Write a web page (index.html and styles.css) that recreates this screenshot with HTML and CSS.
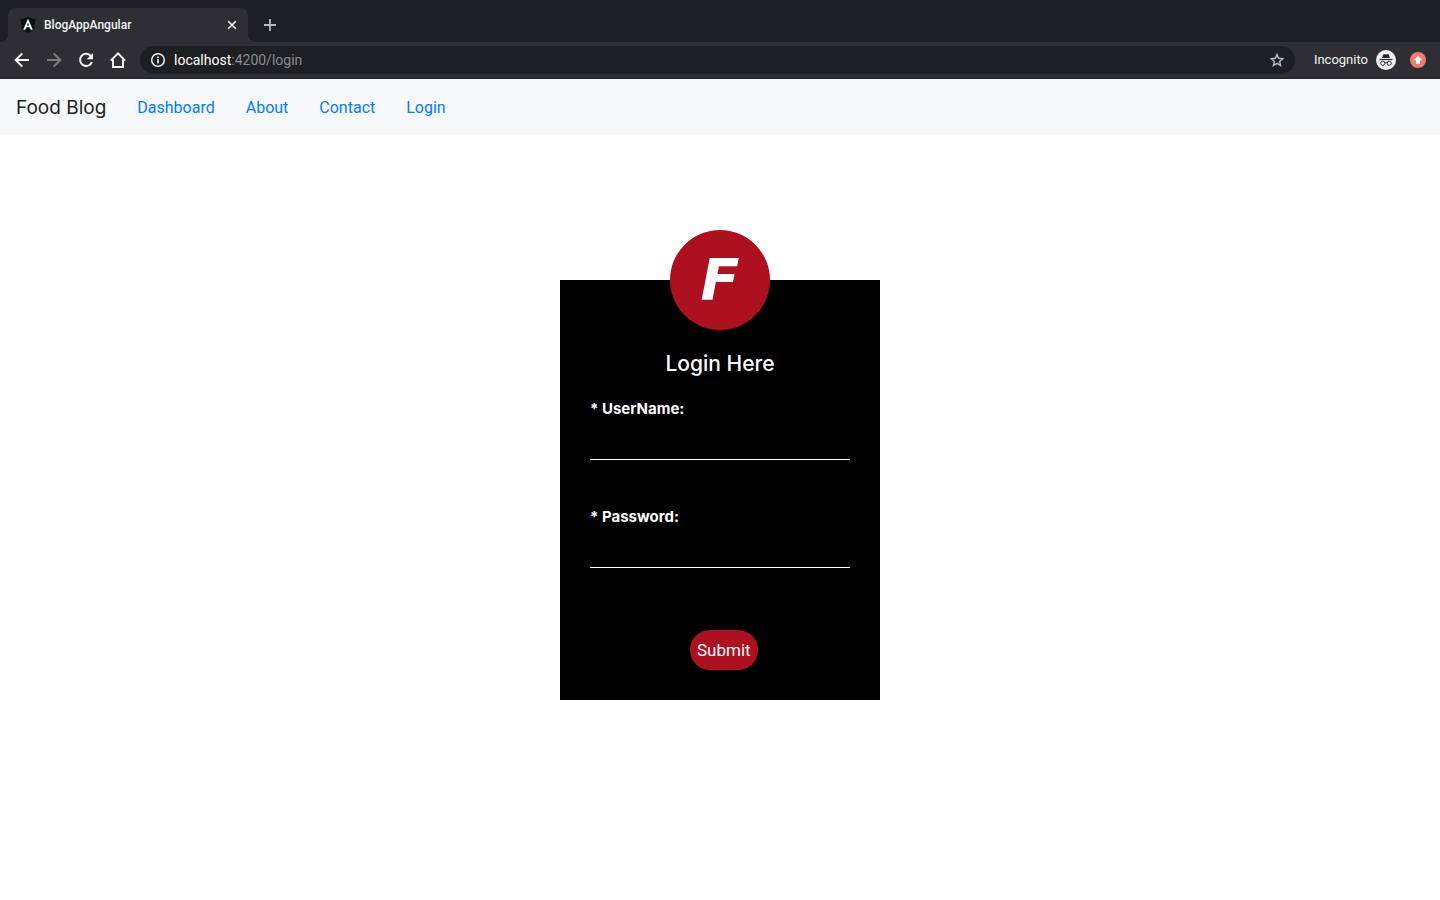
FILE: index.html
```html
<!DOCTYPE html>
<html lang="en">
<head>
<meta charset="utf-8">
<meta name="viewport" content="width=device-width, initial-scale=1">
<title>BlogAppAngular</title>
<link rel="stylesheet" href="styles.css">
</head>
<body>
<header class="browser">
  <div class="tabstrip">
    <div class="tab">
      <svg class="favicon" width="16" height="16" viewBox="0 0 16 16" aria-hidden="true"><path d="M8 0l7.500 2.600-1.200 9.900L8 16l-6.300-3.500L.5 2.600z" fill="#0b1119"/><path d="M8 1.700L3.200 12.700h2.100l1-2.500h3.400l1 2.500h2.100zM8 5.500l1.100 2.900H6.900z" fill="#fff"/></svg>
      <span class="tab-title">BlogAppAngular</span>
      <button class="icon-button tab-close" type="button" aria-label="Close tab"><svg width="16" height="16" viewBox="0 0 16 16"><path d="M4.200 4.200l7.600 7.600M11.800 4.200l-7.600 7.600" stroke="#f1f3f4" stroke-width="1.600"/></svg></button>
    </div>
    <button class="icon-button new-tab" type="button" aria-label="New tab"><svg width="16" height="16" viewBox="0 0 16 16"><path d="M8 2v12M2 8h12" stroke="#b9babd" stroke-width="1.800"/></svg></button>
  </div>
  <div class="toolbar">
    <div class="controls">
      <button class="icon-button" type="button" aria-label="Back"><svg width="16" height="16" viewBox="0 0 16 16"><path d="M15 8H2M8.300 1.400L1.700 8l6.600 6.600" fill="none" stroke="#f1f3f4" stroke-width="2"/></svg></button>
      <button class="icon-button" type="button" aria-label="Forward"><svg width="16" height="16" viewBox="0 0 16 16"><path d="M1 8h13M7.700 1.400L14.300 8l-6.600 6.600" fill="none" stroke="#7d7d80" stroke-width="2"/></svg></button>
      <button class="icon-button" type="button" aria-label="Reload"><svg width="16" height="16" viewBox="0 0 16 16"><path d="M12.600 3.700A6.100 6.100 0 1 0 13.900 10" fill="none" stroke="#f1f3f4" stroke-width="2"/><path d="M15 .9v6.300H8.700z" fill="#f1f3f4"/></svg></button>
      <button class="icon-button" type="button" aria-label="Home"><svg width="16" height="16" viewBox="0 0 16 16"><path d="M.8 8.700L8 1.300l7.200 7.400M3 7.500V15h10V7.500" fill="none" stroke="#f1f3f4" stroke-width="1.900"/></svg></button>
    </div>
    <div class="address">
      <svg width="16" height="16" viewBox="0 0 16 16" aria-hidden="true"><circle cx="8" cy="8" r="6.300" fill="none" stroke="#f1f3f4" stroke-width="1.500"/><path d="M8 7.200v4M8 4.400v1.600" stroke="#f1f3f4" stroke-width="1.700"/></svg>
      <span class="url"><span class="url-host">localhost</span>:4200/login</span>
      <button class="icon-button" type="button" aria-label="Bookmark this page"><svg width="16" height="16" viewBox="0 0 16 16"><path d="M8 2.400l1.600 3.900 4.200.4-3.200 2.800 1 4.100L8 11.400l-3.600 2.200 1-4.100-3.200-2.800 4.200-.4z" fill="none" stroke="#b9babd" stroke-width="1.400"/></svg></button>
    </div>
    <span class="incognito">Incognito
      <svg width="20" height="20" viewBox="0 0 20 20" aria-hidden="true"><circle cx="10" cy="10" r="10" fill="#f1f3f4"/><path d="M6 8l1.300-3.600q.2-.5.700-.4l2 .4 2-.4q.5-.1.700.4L14 8z" fill="#2f2f33"/><path d="M3.500 9.500h13" stroke="#2f2f33" stroke-width="1.200"/><circle cx="6.800" cy="13.200" r="2.100" fill="none" stroke="#2f2f33"/><circle cx="13.200" cy="13.200" r="2.100" fill="none" stroke="#2f2f33"/><path d="M8.900 12.900q1.100-.7 2.200 0" fill="none" stroke="#2f2f33"/></svg>
    </span>
    <button class="icon-button update" type="button" aria-label="Update available"><svg width="16" height="16" viewBox="0 0 16 16"><circle cx="8" cy="8" r="8" fill="#f07b72"/><path d="M8 3.800L12.200 8.200H10V12H6V8.200H3.800z" fill="#fff"/></svg></button>
  </div>
</header>
<nav class="navbar">
  <a class="brand" href="#">Food Blog</a>
  <a class="nav-link" href="#">Dashboard</a>
  <a class="nav-link" href="#">About</a>
  <a class="nav-link" href="#">Contact</a>
  <a class="nav-link" href="#">Login</a>
</nav>
<main class="page">
  <form class="login">
    <div class="logo">F</div>
    <h1 class="heading">Login Here</h1>
    <div class="field">
      <label for="username">* UserName:</label>
      <input id="username" type="text">
    </div>
    <div class="field">
      <label for="password">* Password:</label>
      <input id="password" type="password">
    </div>
    <button class="submit" type="button">Submit</button>
  </form>
</main>
</body>
</html>
```
FILE: styles.css
```css
* {
  box-sizing: border-box;
}

body {
  margin: 0;
  background: #fff;
  color: #212529;
  font: 16px/24px Inter, Roboto, "Liberation Sans", sans-serif;
}

svg {
  display: block;
  flex: none;
}

.icon-button {
  display: block;
  flex: none;
  padding: 0;
  border: 0;
  background: none;
}

.browser {
  color: #f1f3f4;
  background: #2f2f33;
}

.tabstrip {
  display: flex;
  align-items: flex-end;
  height: 42px;
  padding-left: 8px;
  background: #1e1f23;
}

.tab {
  position: relative;
  display: flex;
  align-items: center;
  gap: 8px;
  width: 240px;
  height: 34px;
  padding: 0 8px 0 12px;
  border-radius: 8px 8px 0 0;
  background: #2f2f33;
}

.tab::before,
.tab::after {
  content: "";
  position: absolute;
  bottom: 0;
  width: 8px;
  height: 8px;
}

.tab::before {
  right: 100%;
  background: radial-gradient(circle at 0 0, #1e1f23 8px, #2f2f33 8px);
}

.tab::after {
  left: 100%;
  background: radial-gradient(circle at 100% 0, #1e1f23 8px, #2f2f33 8px);
}

.tab-title {
  flex: 1;
  font: 500 12px/16px Roboto, sans-serif;
}

.new-tab {
  margin: 0 0 9px 14px;
}

.toolbar {
  display: flex;
  align-items: center;
  height: 37px;
  padding: 0 14px;
  border-bottom: 1px solid #232327;
}

.controls {
  display: flex;
  align-items: center;
  gap: 16px;
  width: 126px;
}

.address {
  display: flex;
  flex: 1;
  align-items: center;
  gap: 8px;
  height: 28px;
  padding: 0 10px;
  border-radius: 14px;
  background: #1e1f23;
}

.url {
  flex: 1;
  color: #8b8c8f;
  font: 14px/20px Roboto, sans-serif;
}

.url-host {
  color: #fff;
}

.incognito {
  display: flex;
  align-items: center;
  gap: 8px;
  margin-left: 19px;
  font: 13px/20px Roboto, sans-serif;
}

.update {
  margin-left: 14px;
}

.navbar {
  display: flex;
  align-items: center;
  gap: 31px;
  height: 56px;
  padding: 2px 16px 0;
  background: #f7f8fa;
}

.navbar a {
  text-decoration: none;
}

.brand {
  color: #1c1e20;
  font-size: 19px;
}

.nav-link {
  color: #007bff;
  font-family: Roboto, sans-serif;
  font-size: 16px;
}

.page {
  display: flex;
  justify-content: center;
  padding: 145px 16px;
}

.login {
  display: flex;
  flex-direction: column;
  width: 320px;
  padding: 0 30px 30px;
  background: #000;
  color: #fff;
}

.logo {
  align-self: center;
  width: 100px;
  height: 100px;
  margin-top: -50px;
  border-radius: 50%;
  background: #ad101f;
  font: italic bold 57px/100px "DejaVu Sans", sans-serif;
  text-align: center;
}

.heading {
  margin: 20px 0 19px;
  font-size: 21px;
  font-weight: 500;
  line-height: 28px;
  text-align: center;
}

.field {
  display: flex;
  flex-direction: column;
  margin-bottom: 45px;
}

.field label {
  font-size: 15px;
  font-weight: 700;
  line-height: 24px;
}

.field input {
  width: 100%;
  height: 39px;
  padding: 0;
  border: 0;
  border-bottom: 1px solid #fff;
  outline: 0;
  background: transparent;
  color: #fff;
  font: inherit;
}

.submit {
  height: 40px;
  margin: 17px 0 0 100px;
  align-self: flex-start;
  padding: 0 7px;
  border: 0;
  border-radius: 20px;
  background: #ad101f;
  color: #fff;
  font: 17px/28px Roboto, sans-serif;
}
```
